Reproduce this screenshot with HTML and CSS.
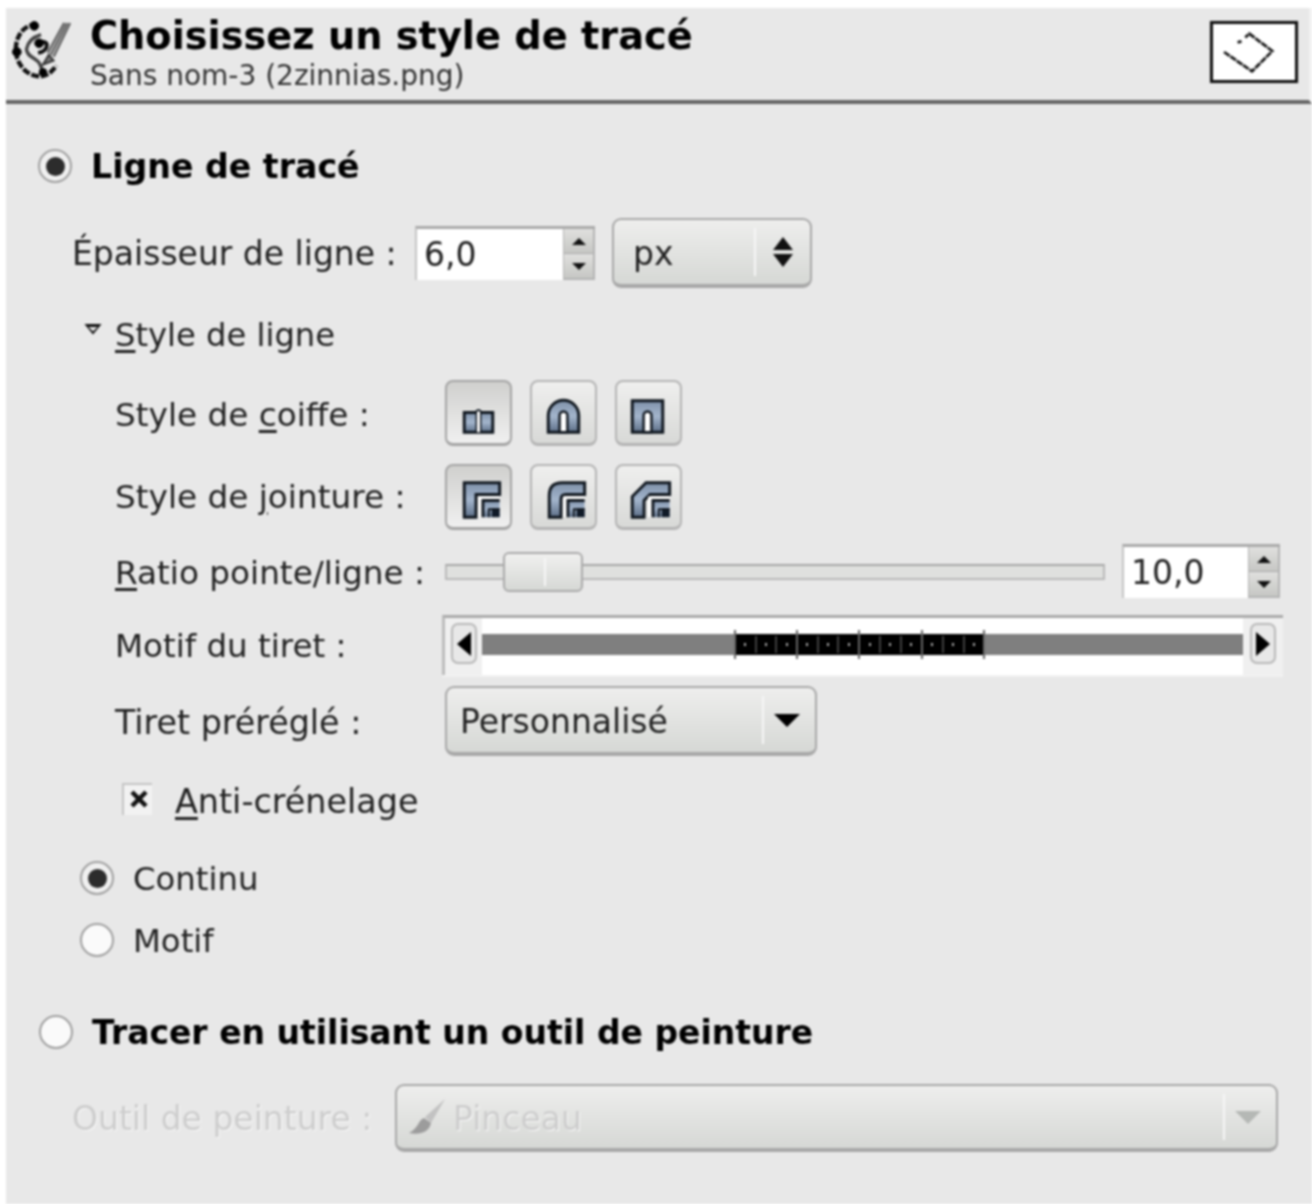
FILE: index.html
```html
<!DOCTYPE html>
<html lang="fr">
<head>
<meta charset="utf-8">
<title>Choisissez un style de tracé</title>
<link rel="stylesheet" href="styles.css">
</head>
<body>
<svg class="defs" width="0" height="0" aria-hidden="true">
  <defs>
    <linearGradient id="steel" x1="0" y1="0" x2="0" y2="1">
      <stop offset="0" stop-color="#7f91a9"/>
      <stop offset="0.5" stop-color="#a3b5cc"/>
      <stop offset="1" stop-color="#5d6f88"/>
    </linearGradient>
    <g id="joint-in">
      <path d="M33 54V33h22v21z" fill="#fff"/>
      <path d="M38 54V37h17v17z" fill="url(#steel)"/>
      <path d="M38 54V37h17" fill="none" stroke="#111820" stroke-width="3"/>
      <path d="M55 45h-8v9h8z" fill="#101a28"/>
      <path d="M44 54v-8h11" fill="none" stroke="#111820" stroke-width="2"/>
    </g>
  </defs>
</svg>
<main class="panel">
  <header class="head">
    <svg class="head-icon" viewBox="0 0 62 64" fill="none" stroke="#111">
      <path d="M26 5C14 4 5 14 4 28c-1 14 8 28 22 30 9 1 14-3 20-11" stroke-width="4.5" stroke-dasharray="8 2"/>
      <path d="M30 15c-10 3-14 9-15 15 0 7 7 8 12 13 3 3 3 7 5 10" stroke-width="3.5" stroke="#444"/>
      <path d="M27 24c5-3 9-1 9 2 0 4-4 7-9 8" stroke-width="4"/>
      <circle cx="23" cy="6" r="4.500" fill="#000"/>
      <circle cx="5" cy="33" r="4.500" fill="#000"/>
      <circle cx="28" cy="24" r="4.500" fill="#000"/>
      <circle cx="32" cy="54" r="4" fill="#000"/>
      <path d="M60 3L43 38M57 3L40 36M54 3L37 34" stroke-width="2.500" stroke="#666"/>
      <path d="M38 36l-6 10 11-4z" fill="#777" stroke="#333" stroke-width="2"/>
    </svg>
    <div class="head-text">
      <h1 class="title">Choisissez un style de tracé</h1>
      <p class="subtitle">Sans nom-3 (2zinnias.png)</p>
    </div>
    <div class="preview">
      <svg viewBox="0 0 84 58" fill="none" stroke="#111" stroke-width="2.8">
        <path d="M11 29L40 49L61 28L37 10L33 14" stroke-dasharray="7 1"/>
        <path d="M25 19l4-1"/>
      </svg>
    </div>
  </header>

  <section class="form">
    <label class="section-row row-line">
      <span class="radio on"></span><strong class="section-label">Ligne de tracé</strong>
    </label>

    <div class="width-row">
      <span class="label">Épaisseur de ligne :</span>
      <div class="spin spin-wide">
        <span class="entry">6,0</span>
        <span class="spin-btns"><i class="up"></i><i class="down"></i></span>
      </div>
      <div class="combo combo-px">
        <span class="combo-text">px</span>
        <span class="combo-sep"></span>
        <span class="updown"><i class="up"></i><i class="down"></i></span>
      </div>
    </div>

    <div class="expander"><i class="tri"></i><span class="label"><u>S</u>tyle de ligne</span></div>

    <div class="fields">
      <div class="field">
        <span class="label">Style de <u>c</u>oiffe :</span>
        <div class="toggles">
          <button class="tool active"><svg viewBox="2 2 63 62">
            <path d="M19 33h13v20H19zM35 33h13v20H35z" fill="url(#steel)" stroke="#111820" stroke-width="3"/>
            <path d="M33.5 29v24" stroke="#fff" stroke-width="3"/>
            <path d="M31 32q2.500-3 5 0" fill="none" stroke="#111820" stroke-width="2"/>
          </svg></button>
          <button class="tool"><svg viewBox="2 2 63 62">
            <path d="M18 53V36a15.500 15.500 0 0 1 31 0v17z" fill="url(#steel)" stroke="#111820" stroke-width="3"/>
            <path d="M29.500 53V36a4 4 0 0 1 8 0v17z" fill="#fff" stroke="#111820" stroke-width="2.5"/>
          </svg></button>
          <button class="tool"><svg viewBox="2 2 63 62">
            <path d="M17 53V21h31v32z" fill="url(#steel)" stroke="#111820" stroke-width="3"/>
            <path d="M28.500 53V36a4 4 0 0 1 8 0v17z" fill="#fff" stroke="#111820" stroke-width="2.500"/>
          </svg></button>
        </div>
      </div>

      <div class="field field-join">
        <span class="label">Style de <u>j</u>ointure :</span>
        <div class="toggles">
          <button class="tool active"><svg viewBox="2 2 63 62">
            <path d="M19 54V19h36v12H31v23z" fill="url(#steel)" stroke="#111820" stroke-width="3"/>
            <use href="#joint-in"/>
          </svg></button>
          <button class="tool"><svg viewBox="2 2 63 62">
            <path d="M19 54V32q0-13 13-13h23v12H36q-5 0-5 5v18z" fill="url(#steel)" stroke="#111820" stroke-width="3"/>
            <use href="#joint-in"/>
          </svg></button>
          <button class="tool"><svg viewBox="2 2 63 62">
            <path d="M17 54V33l14-14h24v12H35l-6 6v17z" fill="url(#steel)" stroke="#111820" stroke-width="3"/>
            <use href="#joint-in"/>
          </svg></button>
        </div>
      </div>

      <div class="field field-ratio">
        <span class="label"><u>R</u>atio pointe/ligne :</span>
        <div class="slider"><span class="thumb"></span></div>
        <div class="spin spin-narrow">
          <span class="entry">10,0</span>
          <span class="spin-btns"><i class="up"></i><i class="down"></i></span>
        </div>
      </div>

      <div class="field field-dash">
        <span class="label">Motif du tiret :</span>
        <div class="dash">
          <span class="dash-btn"><i class="left"></i></span>
          <div class="dash-track">
            <div class="dash-bar">
              <svg class="dash-ruler" viewBox="0 0 252 31">
                <rect x="1" y="5" width="250" height="21" fill="#000"/>
                <path d="M1 1v29M63 1v29M125 1v29M188 1v29M250 1v29" stroke="#666" stroke-width="2"/>
                <path d="M22 7v17M42 7v17M84 7v17M104 7v17M146 7v17M167 7v17M209 7v17M230 7v17" stroke="#555" stroke-width="1.500"/>
                <path d="M11 14v3M32 14v3M53 14v3M73 14v3M94 14v3M115 14v3M136 14v3M156 14v3M177 14v3M198 14v3M219 14v3M240 14v3" stroke="#aaa" stroke-width="2"/>
              </svg>
            </div>
          </div>
          <span class="dash-btn dash-btn-end"><i class="right"></i></span>
        </div>
      </div>

      <div class="field field-preset">
        <span class="label">Tiret préréglé :</span>
        <div class="combo combo-dash">
          <span class="combo-text">Personnalisé</span>
          <span class="combo-sep"></span>
          <i class="down big"></i>
        </div>
      </div>
    </div>

    <label class="check-row">
      <span class="check"><svg viewBox="0 0 28 30"><path d="M8 7l14 14M22 7L8 21" stroke="#111" stroke-width="4.5" fill="none"/></svg></span>
      <span class="label"><u>A</u>nti-crénelage</span>
    </label>

    <label class="sub-radio sub-first"><span class="radio on"></span><span class="label">Continu</span></label>
    <label class="sub-radio"><span class="radio"></span><span class="label">Motif</span></label>

    <label class="section-row row-tool">
      <span class="radio"></span><strong class="section-label">Tracer en utilisant un outil de peinture</strong>
    </label>

    <div class="tool-row">
      <span class="label disabled">Outil de peinture :</span>
      <div class="combo combo-tool">
        <svg class="brush" viewBox="0 0 40 40"><path d="M38 2L18 20l6 6L38 2z" fill="#c2c2c2"/><path d="M17 21c-6 2-5 10-15 15 10 2 20 0 22-10z" fill="#9c9c9c"/></svg>
        <span class="combo-text disabled">Pinceau</span>
        <span class="combo-sep"></span>
        <i class="down big muted"></i>
      </div>
    </div>
  </section>
</main>
</body>
</html>
```
FILE: styles.css
```css
* { box-sizing: border-box; }
html, body { margin: 0; padding: 0; }
body {
  width: 1312px;
  height: 1204px;
  overflow: hidden;
  background: #fff;
  padding: 8px 0 0 6px;
  font-family: "DejaVu Sans", sans-serif;
  color: #333;
}
.defs { position: absolute; }
.panel {
  height: 1196px;
  background: #e8e8e8;
  filter: blur(0.8px);
}
.head {
  height: 96px;
  display: flex;
  align-items: center;
  padding: 0 11px 0 6px;
  border-bottom: 4px solid #666;
  border-right: 3px solid #f2f2f2;
}
.head-icon { width: 60px; height: 62px; margin-top: -6px; flex: none; }
.head-text { margin-left: 18px; flex: 1; margin-top: -2px; }
.title {
  margin: 0;
  font-size: 38.300px;
  line-height: 46px;
  font-weight: 700;
  color: #000;
}
.subtitle {
  margin: 0;
  font-size: 28px;
  line-height: 34px;
  color: #333;
}
.preview {
  width: 88px;
  height: 62px;
  margin-top: -4px;
  background: #fff;
  border: 3px solid #111;
  box-shadow: 0 0 0 1px #ddd;
  display: flex;
}
.preview svg { width: 100%; height: 100%; }

.form { padding-left: 32px; }
.label {
  font-size: 33px;
  line-height: 40px;
  padding-top: 2px;
  color: #222;
  white-space: nowrap;
}
.label u { text-underline-offset: 4px; }
.label.disabled, .combo-text.disabled { color: #cdcdcd; text-shadow: 1px 1px 0 #f8f8f8; }
.section-row { display: flex; align-items: center; gap: 19px; height: 40px; }
.section-label {
  font-size: 33.200px;
  line-height: 40px;
  padding-top: 2px;
  color: #000;
  white-space: nowrap;
}
.row-tool .section-label { font-size: 33px; }
.row-line { margin-top: 42px; }
.row-tool { margin-top: 52px; padding-left: 1px; }
.radio {
  width: 34px;
  height: 34px;
  flex: none;
  border-radius: 50%;
  border: 2px solid #a0a0a0;
  background: #fafafa;
  display: flex;
  align-items: center;
  justify-content: center;
}
.radio.on { background: #f0f0f0; }
.radio.on::after {
  content: "";
  width: 19px;
  height: 19px;
  border-radius: 50%;
  background: #2c2c2c;
}

.width-row {
  display: flex;
  align-items: center;
  height: 70px;
  margin-top: 32px;
  padding-left: 34px;
}
.width-row .label { width: 343px; }
.spin { display: flex; background: #fff; border-top: 3px solid #aaa; border-left: 2px solid #c4c4c4; }
.spin-wide { width: 180px; height: 54px; }
.spin-narrow { width: 158px; height: 54px; }
.entry {
  flex: 1;
  font-size: 33px;
  line-height: 48px;
  padding-left: 7px;
  padding-top: 2px;
  color: #222;
}
.spin-btns {
  width: 32px;
  display: flex;
  flex-direction: column;
  background: #d2d3d0;
  border-left: 1px solid #b4b4b4;
  border-right: 2px solid #b4b4b4;
  border-bottom: 2px solid #b4b4b4;
}
.spin-btns i {
  flex: 1;
  display: flex;
  align-items: center;
  justify-content: center;
  background: linear-gradient(#e0e0de, #c6c7c4);
}
.spin-btns i.up { border-bottom: 1px solid #aaa; }
.spin-btns i::after, .updown i::after {
  content: "";
  width: 0;
  height: 0;
  border-left: 7px solid transparent;
  border-right: 7px solid transparent;
}
.spin-btns i.up::after { border-bottom: 7px solid #111; }
.spin-btns i.down::after { border-top: 7px solid #111; }

.combo {
  display: flex;
  align-items: center;
  border: 2px solid #a8a8a8;
  border-bottom-width: 4px;
  border-radius: 9px;
  background: linear-gradient(#eeeeed, #d6d8d5);
}
.combo-text { font-size: 33px; line-height: 40px; padding-top: 3px; color: #222; white-space: nowrap; flex: 1; }
.combo-sep { width: 2px; align-self: stretch; margin: 8px 0; background: #f6f6f6; }
.combo-px { width: 200px; height: 70px; margin-left: 17px; padding-left: 19px; }
.combo-px .combo-sep { margin-right: 17px; }
.combo-px .updown { margin-right: 17px; }
.updown { display: flex; flex-direction: column; gap: 4px; }
.updown i { display: flex; height: 13px; }
.updown i::after { border-left-width: 10px; border-right-width: 10px; }
.updown i.up::after { border-bottom: 13px solid #111; }
.updown i.down::after { border-top: 13px solid #111; }
i.big {
  width: 0;
  height: 0;
  border-left: 13px solid transparent;
  border-right: 13px solid transparent;
  border-top: 13px solid #000;
  margin: 0 15px 0 10px;
}
i.big.muted { border-top-color: #b5b8b5; }

.expander {
  display: flex;
  align-items: center;
  gap: 13px;
  height: 40px;
  margin-top: 26px;
  padding-left: 46px;
}
.expander .label { font-size: 32.200px; }
.tri {
  width: 18px;
  height: 11px;
  margin-top: -10px;
  background: #111;
  clip-path: polygon(0 0, 100% 0, 50% 100%);
  position: relative;
}
.tri::after {
  content: "";
  position: absolute;
  left: 4px;
  top: 3px;
  width: 10px;
  height: 5px;
  background: #e8e8e8;
  clip-path: polygon(0 0, 100% 0, 50% 100%);
}

.fields { margin-top: 26px; padding-left: 77px; }
.field { display: flex; align-items: center; }
.field > .label { width: 330px; flex: none; font-size: 32.700px; padding-top: 3px; }
.field-join { margin-top: 18px; }
.field-join > .label { padding-top: 0; }
.field-ratio { margin-top: 11px; height: 60px; }
.field-dash { margin-top: 14px; }
.field-dash > .label { font-size: 32.500px; padding-top: 1px; }
.field-preset { margin-top: 0; padding-top: 11px; }
.field-preset > .label { font-size: 33.300px; }
.toggles { display: flex; gap: 18px; height: 66px; }
.tool {
  width: 67px;
  height: 66px;
  padding: 0;
  border: 2px solid #b4b4b4;
  border-bottom-width: 3px;
  border-radius: 8px;
  background: linear-gradient(#efefee, #d8d9d7);
  display: flex;
}
.tool.active { background: linear-gradient(#d0d0ce, #f0f0f0); border-color: #a4a4a4; }
.tool svg { width: 100%; height: 100%; }

.slider {
  position: relative;
  width: 660px;
  height: 16px;
  margin-top: 2px;
  background: #dfe0de;
  border: 2px solid #b9b9b9;
  border-top-color: #a6a6a6;
  margin-right: 17px;
  flex: none;
}
.thumb {
  position: absolute;
  left: 56px;
  top: -14px;
  width: 80px;
  height: 40px;
  border: 2px solid #aaa;
  border-radius: 6px;
  background: linear-gradient(#f0f0ef, #d6d8d5);
}
.thumb::after {
  content: "";
  position: absolute;
  left: 39px;
  top: 4px;
  bottom: 4px;
  width: 2px;
  background: #f6f6f6;
}
.dash {
  display: flex;
  align-items: stretch;
  width: 841px;
  height: 60px;
  margin-left: -3px;
  background: #fff;
  border-top: 3px solid #aaa;
  border-left: 3px solid #bcbcbc;
  box-shadow: 0 2px 0 #f2f2f2;
}
.dash-btn {
  width: 37px;
  background: #f0f0f0;
  display: flex;
  align-items: center;
  justify-content: center;
}
.dash-btn-end { width: 40px; }
.dash-btn i {
  width: 26px;
  height: 41px;
  margin-top: -6px;
  border: 2px solid #b8b8b8;
  border-radius: 7px;
  background: #e8e8e8;
  display: flex;
  align-items: center;
  justify-content: center;
}
.dash-btn i::after {
  content: "";
  width: 0;
  height: 0;
  border-top: 12px solid transparent;
  border-bottom: 12px solid transparent;
}
.dash-btn i.left::after { border-right: 14px solid #000; }
.dash-btn i.right::after { border-left: 14px solid #000; }
.dash-track { flex: 1; display: flex; align-items: center; padding-bottom: 5px; }
.dash-bar {
  width: 100%;
  height: 21px;
  background: #7f7f7f;
  display: flex;
  align-items: center;
  padding-left: 252px;
}
.dash-ruler { width: 252px; height: 31px; flex: none; }
.combo-dash { width: 372px; height: 70px; padding-left: 13px; }

.check-row {
  display: flex;
  align-items: center;
  gap: 23px;
  height: 40px;
  margin-top: 25px;
  padding-left: 84px;
}
.check-row .label { font-size: 33.400px; }
.check {
  width: 30px;
  height: 32px;
  margin-top: -4px;
  flex: none;
  background: #f2f2f2;
  border-top: 2px solid #c4c4c4;
  border-left: 2px solid #c4c4c4;
  display: flex;
}
.check svg { width: 100%; height: 100%; }
.sub-radio {
  display: flex;
  align-items: center;
  gap: 19px;
  height: 40px;
  margin-top: 22px;
  padding-left: 42px;
}
.sub-radio .label { font-size: 32.300px; }
.sub-first { margin-top: 37px; }
.tool-row {
  display: flex;
  align-items: center;
  height: 68px;
  margin-top: 32px;
  padding-left: 34px;
}
.tool-row .label { width: 323px; }
.combo-tool { width: 883px; height: 68px; padding-left: 10px; }
.brush { width: 40px; height: 40px; margin-right: 6px; flex: none; }
```
